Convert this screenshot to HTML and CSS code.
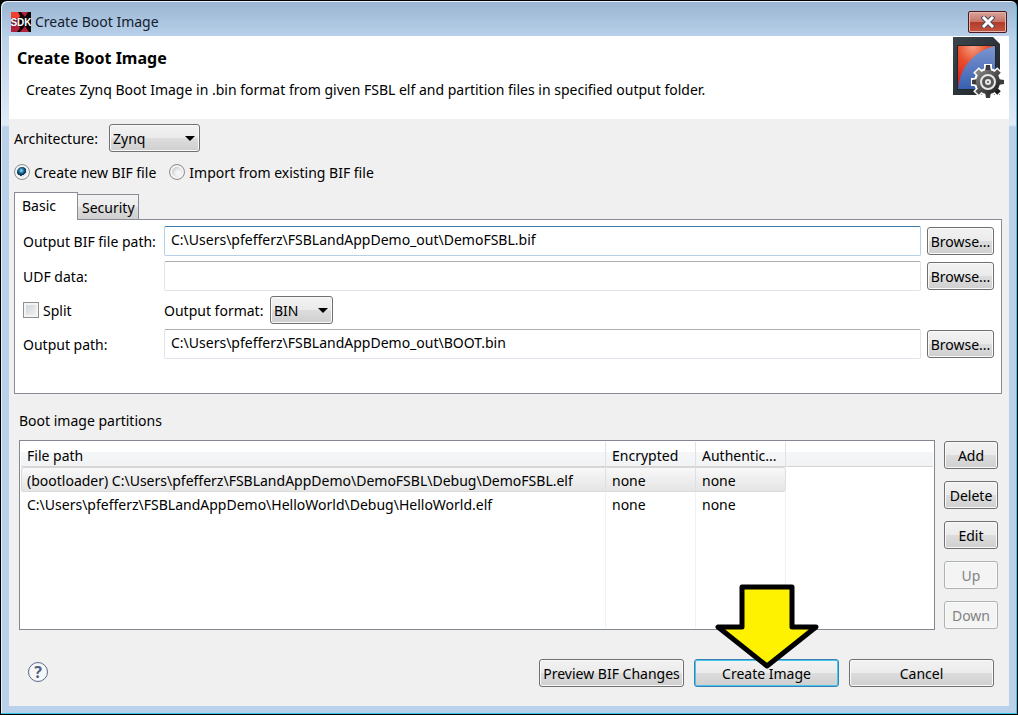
FILE: index.html
```html
<!DOCTYPE html>
<html lang="en">

<head>
  <meta charset="UTF-8">
  <meta name="viewport" content="width=device-width, initial-scale=1.0">
  <title>Create Boot Image</title>
  <link rel="stylesheet" href="styles.css">
</head>

<body>
  <div class="window">
    <div class="titlebar">
      <svg class="app-icon" viewBox="0 0 20 20" aria-hidden="true">
        <rect width="20" height="20" fill="#0a0406"/>
        <path d="M0 0H7L9 4L7 8V12L9 16L6 20H0Z" fill="#b01f3a"/>
        <path d="M0 0H7L9 4L7 7H0Z" fill="#f0402b"/>
        <path d="M10 0H17L14 5ZM9 20H18L14 14Z" fill="#b5203c"/>
        <path d="M0 6H8V14H0Z" fill="#7c1626"/>
        <text x="10" y="14" text-anchor="middle" class="app-icon-text">SDK</text>
      </svg>
      <span class="title">Create Boot Image</span>
      <button type="button" class="close" aria-label="Close">
        <svg viewBox="0 0 14 12" width="14" height="12">
          <path d="M3 2L11 10M11 2L3 10" stroke="#4b4a5c" stroke-width="5" stroke-linecap="square"/>
          <path d="M3 2L11 10M11 2L3 10" stroke="#fff" stroke-width="3" stroke-linecap="square"/>
        </svg>
      </button>
    </div>

    <div class="client">
      <div class="header">
        <div class="header-text">
          <h1>Create Boot Image</h1>
          <p>Creates Zynq Boot Image in .bin format from given FSBL elf and partition files in specified output folder.</p>
        </div>
        <svg class="banner" viewBox="0 0 54 64" aria-hidden="true">
          <defs>
            <linearGradient id="caseFill" x1="0" y1="0" x2="1" y2="1">
              <stop offset="0" stop-color="#3c454d"/>
              <stop offset="1" stop-color="#1d2227"/>
            </linearGradient>
            <radialGradient id="redFill" cx="0.4" cy="0" r="1">
              <stop offset="0" stop-color="#f6a184"/>
              <stop offset="0.4" stop-color="#e8502f"/>
              <stop offset="1" stop-color="#d8151c"/>
            </radialGradient>
            <linearGradient id="blueFill" x1="0" y1="0" x2="0" y2="1">
              <stop offset="0" stop-color="#7b95d0"/>
              <stop offset="1" stop-color="#3a60b0"/>
            </linearGradient>
            <linearGradient id="gearFill" x1="0" y1="0" x2="1" y2="1">
              <stop offset="0" stop-color="#8a8a8a"/>
              <stop offset="1" stop-color="#151515"/>
            </linearGradient>
          </defs>
          <path d="M1 1H41L48 8V59H1Z" fill="url(#caseFill)"/>
          <path d="M5 9H44V54H5Z" fill="#20272d"/>
          <path d="M6 10H43V53H6Z" fill="url(#redFill)"/>
          <path d="M43 10V53H6C8 31 22 15 43 10Z" fill="url(#blueFill)"/>
          <g transform="translate(36 46)">
            <g stroke="#fff" stroke-width="8">
              <path d="M0 -18V17M-17 0H17M-12 -12L12 12M12 -12L-12 12"/>
            </g>
            <circle r="14" fill="#fff"/>
            <g stroke="url(#gearFill)" stroke-width="5">
              <path d="M-11 -11L11 11M11 -11L-11 11"/>
            </g>
            <path d="M-2 -17H2L3 -10H-3ZM-3 10H3L2 16H-2ZM-16 -2L-10 -3V3L-16 2ZM10 -3L16 -2V2L10 3Z" fill="#3c3c3c"/>
            <circle r="12" fill="url(#gearFill)"/>
            <circle r="7" fill="#555" stroke="#e8e8e8" stroke-width="2"/>
            <circle r="3" fill="#e8e8e8"/>
            <circle r="1" fill="#555"/>
          </g>
        </svg>
      </div>

      <form class="content">
        <div class="arch-row">
          <label for="arch">Architecture:</label>
          <div class="select select-arch">
            <select id="arch">
              <option>Zynq</option>
            </select>
          </div>
        </div>

        <div class="radio-row">
          <label><input type="radio" name="bif" checked> <span>Create new BIF file</span></label>
          <label><input type="radio" name="bif"> <span>Import from existing BIF file</span></label>
        </div>

        <div class="tabs" role="tablist">
          <button type="button" class="tab active" role="tab" aria-selected="true">Basic</button>
          <button type="button" class="tab" role="tab" aria-selected="false">Security</button>
        </div>

        <div class="panel">
          <label for="bifPath">Output BIF file path:</label>
          <input type="text" id="bifPath" class="field focused" value="C:\Users\pfefferz\FSBLandAppDemo_out\DemoFSBL.bif">
          <button type="button" class="btn">Browse...</button>

          <label for="udf">UDF data:</label>
          <input type="text" id="udf" class="field">
          <button type="button" class="btn">Browse...</button>

          <label class="split"><input type="checkbox"> <span>Split</span></label>
          <div class="format">
            <label for="format">Output format:</label>
            <div class="select select-format">
              <select id="format">
                <option>BIN</option>
              </select>
            </div>
          </div>

          <label for="outPath">Output path:</label>
          <input type="text" id="outPath" class="field" value="C:\Users\pfefferz\FSBLandAppDemo_out\BOOT.bin">
          <button type="button" class="btn">Browse...</button>
        </div>

        <h2>Boot image partitions</h2>

        <div class="partitions">
          <div class="table-box">
            <table>
              <thead>
                <tr>
                  <th class="col-path">File path</th>
                  <th class="col-flag">Encrypted</th>
                  <th class="col-flag">Authentic...</th>
                  <th class="col-rest"></th>
                </tr>
              </thead>
              <tbody>
                <tr class="selected">
                  <td>(bootloader) C:\Users\pfefferz\FSBLandAppDemo\DemoFSBL\Debug\DemoFSBL.elf</td>
                  <td>none</td>
                  <td>none</td>
                  <td></td>
                </tr>
                <tr>
                  <td>C:\Users\pfefferz\FSBLandAppDemo\HelloWorld\Debug\HelloWorld.elf</td>
                  <td>none</td>
                  <td>none</td>
                  <td></td>
                </tr>
                <tr class="filler">
                  <td></td>
                  <td></td>
                  <td></td>
                  <td></td>
                </tr>
              </tbody>
            </table>
          </div>
          <div class="side-buttons">
            <button type="button" class="btn">Add</button>
            <button type="button" class="btn">Delete</button>
            <button type="button" class="btn">Edit</button>
            <button type="button" class="btn" disabled>Up</button>
            <button type="button" class="btn" disabled>Down</button>
          </div>
        </div>

        <div class="footer">
          <button type="button" class="help" aria-label="Help">?</button>
          <button type="button" class="btn btn-wide">Preview BIF Changes</button>
          <div class="create">
            <button type="button" class="btn btn-wide primary">Create Image</button>
            <svg class="arrow" viewBox="0 0 104 86" width="104" height="86" aria-hidden="true">
              <path d="M27 3H77V43H101L52 82L3 43H27Z" fill="#fff200" stroke="#000" stroke-width="5" stroke-linejoin="round"/>
            </svg>
          </div>
          <button type="button" class="btn btn-wide">Cancel</button>
        </div>
      </form>
    </div>
  </div>
</body>

</html>
```

FILE: styles.css
```css
* {
  box-sizing: border-box;
}

body {
  margin: 0;
  background-color: #000;
  color: #000;
  font-family: "Noto Sans", "Open Sans", sans-serif;
  font-size: 14px;
  line-height: 20px;
}

button,
input,
select {
  font: inherit;
  color: inherit;
}

.window {
  display: flex;
  flex-direction: column;
  min-height: 100vh;
  padding: 0 7px 8px;
  border: 1px solid #000;
  border-radius: 7px 7px 0 0;
  background: linear-gradient(#99b4d1 0, #b9d1ea 36px, #e0ebf7 124px, #b9d1ea 126px);
  box-shadow: inset -1px -1px 0 #35c5e5, inset 1px 1px 0 #e8f1fa;
}

/* Title bar */
.titlebar {
  display: flex;
  align-items: center;
  height: 35px;
  padding: 7px 3px 0;
  color: #14202e;
}

.app-icon {
  width: 20px;
  height: 20px;
  margin-right: 4px;
}

.app-icon-text {
  fill: #fff;
  font-family: "Liberation Sans", sans-serif;
  font-size: 10px;
  font-weight: bold;
}

.title {
  flex: 1;
}

.close {
  display: flex;
  align-items: center;
  justify-content: center;
  width: 39px;
  height: 22px;
  padding: 0;
  border: 1px solid #4a1a24;
  border-radius: 2px;
  background: linear-gradient(#d9a49b, #c97468 48%, #b23a28 50%, #c6553e);
  box-shadow: inset 0 0 0 1px #e2b5ad;
}

/* Dialog area */
.client {
  display: flex;
  flex: 1;
  flex-direction: column;
  margin: 0 1px;
  background-color: #f0f0f0;
}

.header {
  display: flex;
  justify-content: space-between;
  height: 83px;
  padding: 0 3px 0 8px;
  background-color: #fff;
}

.header-text {
  padding-top: 12px;
}

h1 {
  margin: 0;
  font-size: 16px;
  line-height: 20px;
}

.header p {
  margin: 12px 0 0 9px;
}

.banner {
  flex: none;
  width: 54px;
  height: 64px;
}

.content {
  display: flex;
  flex: 1;
  flex-direction: column;
  padding: 5px 7px 19px 5px;
}

.content span,
.arch-row label,
.format label,
.panel > label:not(.split) {
  padding-top: 2px;
}

.arch-row,
.format {
  display: flex;
  align-items: center;
}

.arch-row label {
  width: 95px;
}

.select {
  position: relative;
}

.select select {
  width: 100%;
  height: 28px;
  padding: 2px 3px 0;
  border: 1px solid #707070;
  border-radius: 3px;
  background: linear-gradient(#f2f2f2, #ebebeb 49%, #dddddd 50%, #cfcfcf);
  box-shadow: inset 0 0 0 1px #fafafa;
  appearance: none;
}

.select::after {
  content: "";
  position: absolute;
  top: 12px;
  right: 5px;
  border: 5px solid transparent;
  border-top-color: #000;
  border-bottom: 0;
  pointer-events: none;
}

.select-arch {
  width: 91px;
}

.select-format {
  width: 63px;
}

.radio-row {
  display: flex;
  gap: 13px;
  height: 20px;
  margin: 10px 0;
}

.radio-row label,
.split {
  display: flex;
  align-items: center;
  gap: 4px;
}

.radio-row input {
  width: 16px;
  height: 16px;
  margin: 0;
  border: 1px solid #8e8f8f;
  border-radius: 50%;
  background: radial-gradient(circle at 60% 60%, #f4f4f4 20%, #c9cdd1 60%);
  box-shadow: inset 0 0 0 2px #f4f4f4;
  appearance: none;
}

.radio-row input:checked {
  background: radial-gradient(circle at 45% 40%, #9fe0f5 0, #2a86b4 2px, #0b3450 4px, #173f5c 5px, #dce6ec 5px);
}

/* Tabs */
.tabs {
  display: flex;
  align-items: flex-end;
}

.tab {
  height: 25px;
  padding: 2px 3px 0 4px;
  border: 1px solid #898c95;
  border-bottom: 0;
  border-left: 0;
  background: linear-gradient(#f2f2f2, #ebebeb 49%, #dddddd 50%, #cfcfcf);
}

.tab.active {
  z-index: 1;
  width: 64px;
  height: 28px;
  margin-bottom: -1px;
  padding: 0 7px 2px;
  border-left: 1px solid #898c95;
  background: #fff;
  text-align: left;
}

.panel {
  display: grid;
  grid-template-columns: 135px 1fr 67px;
  gap: 5px 6px;
  align-items: center;
  padding: 6px 7px 34px 8px;
  border: 1px solid #898c95;
  background-color: #fff;
}

.field {
  width: 100%;
  height: 30px;
  padding: 0 6px 3px;
  border: 1px solid #e2e3ea;
  border-top-color: #abadb3;
  border-radius: 2px;
  background-color: #fff;
  outline: none;
}

.field.focused {
  border-color: #b5cfe7;
  border-top-color: #3d7bad;
}

.split input {
  width: 16px;
  height: 16px;
  margin: 0;
  border: 1px solid #8e8f8f;
  background: linear-gradient(135deg, #cbcfd5, #f6f6f6);
  box-shadow: inset 0 0 0 2px #f4f4f4;
  appearance: none;
}

.format {
  grid-column: 2 / 4;
}

.format label {
  width: 106px;
}

.btn {
  height: 28px;
  padding: 2px 0 0;
  border: 1px solid #707070;
  border-radius: 3px;
  background: linear-gradient(#f2f2f2, #ebebeb 49%, #dddddd 50%, #cfcfcf);
  box-shadow: inset 0 0 0 1px #fafafa;
  white-space: nowrap;
}

.btn:disabled {
  border-color: #adb2b5;
  background: #f4f4f4;
  color: #838383;
}

/* Partition list */
h2 {
  margin: 17px 0 9px 5px;
  font-size: 14px;
  font-weight: normal;
}

.partitions {
  display: flex;
  flex: 1;
  gap: 9px;
  padding: 0 4px 0 5px;
}

.table-box {
  display: flex;
  flex: 1;
  padding: 1px;
  border: 1px solid #828790;
  background-color: #fff;
}

table {
  width: 100%;
  border-spacing: 0;
  table-layout: fixed;
}

th,
td {
  height: 25px;
  padding: 0 6px;
  border-right: 1px solid #edf2f9;
  font-weight: normal;
  text-align: left;
  white-space: nowrap;
}

th {
  padding-top: 4px;
  border-right-color: #dfe2e6;
  border-bottom: 1px solid #d5d5d5;
  background: linear-gradient(#fff 40%, #f5f6f8 42%, #f2f3f5);
}

th:last-child,
td:last-child {
  border-right: 0;
}

.col-path {
  width: 585px;
}

.col-flag {
  width: 90px;
}

.selected td {
  padding-top: 2px;
  border-top: 1px solid #d9d9d9;
  border-bottom: 1px solid #d9d9d9;
  border-right-color: #dcdfe3;
  background: linear-gradient(#f8f8f8, #e5e5e5);
}

.selected td:first-child {
  border-left: 1px solid #d9d9d9;
  border-radius: 3px 0 0 3px;
  padding-left: 5px;
}

.selected td:nth-child(3) {
  border-radius: 0 3px 3px 0;
}

.selected td:last-child {
  border: 0;
  background: none;
}

.filler td {
  height: auto;
}

.side-buttons {
  display: flex;
  flex-direction: column;
  gap: 12px;
  width: 54px;
  padding: 1px 0 0;
}

/* Bottom row */
.footer {
  display: flex;
  align-items: center;
  gap: 10px;
  margin-top: 29px;
  padding: 0 8px 0 14px;
}

.help {
  width: 20px;
  height: 20px;
  margin: 0 auto 2px 0;
  padding: 0;
  border: 1px solid #5b6b8c;
  border-radius: 50%;
  background-color: #f7f7f7;
  color: #4d5f85;
  font-size: 16px;
  font-weight: bold;
  line-height: 18px;
}

.btn-wide {
  width: 145px;
}

.create {
  position: relative;
}

.create .btn {
  display: block;
}

.primary {
  border-color: #3c7fb1;
  box-shadow: inset 0 0 0 1px #45c8ee;
}

.arrow {
  position: absolute;
  bottom: 17px;
  left: 21px;
}
```
